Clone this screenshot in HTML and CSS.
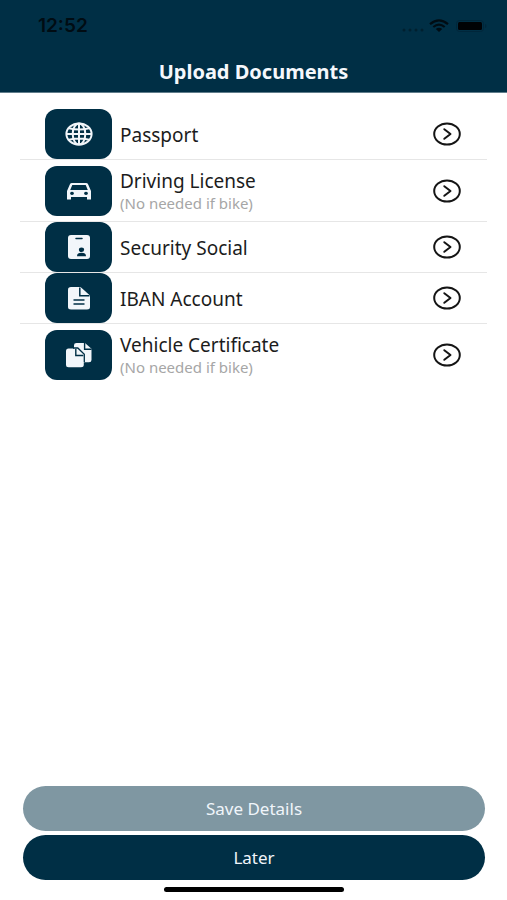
FILE: index.html
```html
<!DOCTYPE html>
<html lang="en">
<head>
<meta charset="utf-8">
<meta name="viewport" content="width=device-width, initial-scale=1">
<title>Upload Documents</title>
<link rel="stylesheet" href="styles.css">
</head>
<body>
<header class="header">
  <div class="status">
    <span class="time">12:52</span>
    <div class="indicators">
      <svg class="signal" width="24" height="18" viewBox="0 0 24 18" aria-hidden="true"><g fill="#00202f"><circle cx="3" cy="13" r="1.5"/><circle cx="9" cy="13" r="1.5"/><circle cx="15" cy="13" r="1.5"/><circle cx="21" cy="13" r="1.5"/></g></svg>
      <svg width="20" height="18" viewBox="0 0 20 18" aria-hidden="true"><g fill="none" stroke="#000c13" stroke-width="2.2"><path d="M1 7.2Q10-.4 19 7.2"/><path d="M4.3 10Q10 5.400 15.700 10"/></g><path d="M6.800 12Q10 9.400 13.200 12L10 15z" fill="#000c13"/></svg>
      <svg class="battery" width="32" height="18" viewBox="0 0 32 18" aria-hidden="true"><rect x="1.500" y="3.500" width="27" height="11" rx="3" fill="none" stroke="#00263a"/><rect x="3" y="5" width="24" height="8" rx="1.500" fill="#000205"/><path d="M30 7v4q1.500-.6 1.500-2T30 7" fill="#00263a"/></svg>
    </div>
  </div>
  <h1 class="title">Upload Documents</h1>
</header>
<main class="main">
  <ul class="documents">
    <li><a class="row" href="#passport">
      <span class="tile"><svg width="28" height="24" viewBox="0 0 28 24" aria-hidden="true"><g fill="none" stroke="#f2f6fa" stroke-width="2"><ellipse cx="14" cy="12" rx="12.600" ry="10.600"/><ellipse cx="14" cy="12" rx="6.300" ry="10.600"/><path d="M14 1.400v21.200M1.400 12h25.200M4 6.200q10 2.600 20 0M4 17.800q10-2.600 20 0"/></g></svg></span>
      <span class="label">Passport</span>
      <svg class="go" width="28" height="24" viewBox="0 0 28 24" aria-hidden="true"><g fill="none" stroke="#151515" stroke-width="2"><ellipse cx="14" cy="12" rx="12.800" ry="10.600"/><path d="M11.300 7.200L17.500 12l-6.200 4.800" stroke-linecap="round" stroke-linejoin="round"/></g></svg>
    </a></li>
    <li><a class="row tall" href="#license">
      <span class="tile"><svg width="28" height="24" viewBox="0 0 28 24" aria-hidden="true"><path fill="#f2f6fa" fill-rule="evenodd" d="M7 4h14q1.600 0 2.200 1.400L26 12v8.500h-4V18H6v2.500H2V12l2.800-6.600Q5.400 4 7 4zM7.300 6L5.200 11h17.600L20.700 6zM7 12.800a1.900 1.600 0 1 0 .01 0zM21 12.800a1.900 1.600 0 1 0 .01 0z"/></svg></span>
      <span class="label">Driving License<small>(No needed if bike)</small></span>
      <svg class="go" width="28" height="24" viewBox="0 0 28 24" aria-hidden="true"><g fill="none" stroke="#151515" stroke-width="2"><ellipse cx="14" cy="12" rx="12.800" ry="10.600"/><path d="M11.300 7.200L17.500 12l-6.200 4.800" stroke-linecap="round" stroke-linejoin="round"/></g></svg>
    </a></li>
    <li><a class="row" href="#social">
      <span class="tile"><svg width="28" height="26" viewBox="0 0 28 26" aria-hidden="true"><rect x="3" y="1" width="22" height="24" rx="3" fill="#f2f6fa"/><path d="M11 4.500h6" stroke="#002f45" stroke-width="1.500" stroke-linecap="round"/><ellipse cx="16.500" cy="15.700" rx="2.600" ry="2.300" fill="#002f45"/><path d="M12 22.200q0-3.400 4.500-3.400t4.500 3.400z" fill="#002f45"/></svg></span>
      <span class="label">Security Social</span>
      <svg class="go" width="28" height="24" viewBox="0 0 28 24" aria-hidden="true"><g fill="none" stroke="#151515" stroke-width="2"><ellipse cx="14" cy="12" rx="12.800" ry="10.600"/><path d="M11.300 7.200L17.500 12l-6.200 4.800" stroke-linecap="round" stroke-linejoin="round"/></g></svg>
    </a></li>
    <li><a class="row" href="#iban">
      <span class="tile"><svg width="28" height="26" viewBox="0 0 28 26" aria-hidden="true"><path d="M6 2h9.500L25 10.500V22q0 2.500-3 2.500H6q-3 0-3-2.500V4.500Q3 2 6 2z" fill="#f2f6fa"/><path d="M14.800 2.500v8.300h9.700M8.500 15h11M8.500 19h11" fill="none" stroke="#002f45" stroke-width="1.500"/></svg></span>
      <span class="label">IBAN Account</span>
      <svg class="go" width="28" height="24" viewBox="0 0 28 24" aria-hidden="true"><g fill="none" stroke="#151515" stroke-width="2"><ellipse cx="14" cy="12" rx="12.800" ry="10.600"/><path d="M11.300 7.200L17.500 12l-6.200 4.800" stroke-linecap="round" stroke-linejoin="round"/></g></svg>
    </a></li>
    <li><a class="row tall" href="#vehicle">
      <span class="tile"><svg width="28" height="26" viewBox="0 0 28 26" aria-hidden="true"><path d="M11.500 1H20l6.500 5.800V18q0 2.200-2.500 2.200H11.500Q9 20.200 9 18V3.200Q9 1 11.500 1z" fill="#f2f6fa"/><path d="M19.600 1v6.200h7" fill="none" stroke="#002f45" stroke-width="1.400"/><path d="M3.500 6.500H12l6.800 6.200v10.100q0 2.500-2.800 2.500H3.500Q1 25.300 1 22.800V9q0-2.500 2.500-2.500z" fill="#f2f6fa"/><path d="M8 6h4.800l6.500 6.200V20" fill="none" stroke="#002f45" stroke-width="1.300"/><path d="M10.800 7v6.500h7.500" fill="none" stroke="#002f45" stroke-width="1.400"/></svg></span>
      <span class="label">Vehicle Certificate<small>(No needed if bike)</small></span>
      <svg class="go" width="28" height="24" viewBox="0 0 28 24" aria-hidden="true"><g fill="none" stroke="#151515" stroke-width="2"><ellipse cx="14" cy="12" rx="12.800" ry="10.600"/><path d="M11.300 7.200L17.500 12l-6.200 4.800" stroke-linecap="round" stroke-linejoin="round"/></g></svg>
    </a></li>
  </ul>
</main>
<footer class="actions">
  <button class="button muted" type="button">Save Details</button>
  <button class="button" type="button">Later</button>
  <div class="home"></div>
</footer>
</body>
</html>
```
FILE: styles.css
```css
* {
  box-sizing: border-box;
}

body {
  display: flex;
  flex-direction: column;
  min-height: 100vh;
  margin: 0;
  background: #fff;
  color: #1c1c1c;
  font-family: "Noto Sans", sans-serif;
}

.header {
  padding-top: 16px;
  background: #002f45;
  border-bottom: 1px solid #607d8b;
}

.status {
  display: flex;
  align-items: center;
  justify-content: space-between;
  height: 20px;
  padding: 0 20px 0 38px;
}

.time {
  color: #000c13;
  font: 600 19px/20px Inter, sans-serif;
}

.indicators {
  display: flex;
  align-items: center;
  gap: 4px;
}

.battery {
  margin-left: 2px;
}

.title {
  margin: 0;
  padding: 24px 0 8px;
  color: #f5f8fc;
  font-size: 20px;
  font-weight: 700;
  line-height: 24px;
  text-align: center;
}

.main {
  flex: 1;
  padding: 16px 20px 24px;
}

.documents {
  margin: 0;
  padding: 0;
  list-style: none;
}

.documents li + li {
  border-top: 1px solid #e6e6e6;
}

.row {
  display: flex;
  align-items: center;
  min-height: 50px;
  padding: 0 26px 0 25px;
  color: inherit;
  text-decoration: none;
}

.tall {
  min-height: 61px;
}

.tile {
  display: grid;
  flex: none;
  place-items: center;
  width: 67px;
  height: 50px;
  margin-right: 8px;
  border-radius: 12px;
  background: #002f45;
}

.label {
  flex: 1;
  padding-top: 1px;
  font-size: 19px;
  line-height: 24px;
}

.label small {
  display: block;
  color: #a6a6a6;
  font-size: 15px;
  line-height: 20px;
}

.go {
  flex: none;
}

.actions {
  display: flex;
  flex-direction: column;
  gap: 4px;
  padding: 0 22px 8px 23px;
}

.button {
  height: 45px;
  border: 0;
  border-radius: 28px;
  background: #002f45;
  color: #f0f5fa;
  font: 17px/24px "Noto Sans", sans-serif;
}

.muted {
  background: #7f97a2;
}

.home {
  align-self: center;
  width: 39%;
  height: 5px;
  margin-top: 3px;
  border-radius: 3px;
  background: #000;
}
```
